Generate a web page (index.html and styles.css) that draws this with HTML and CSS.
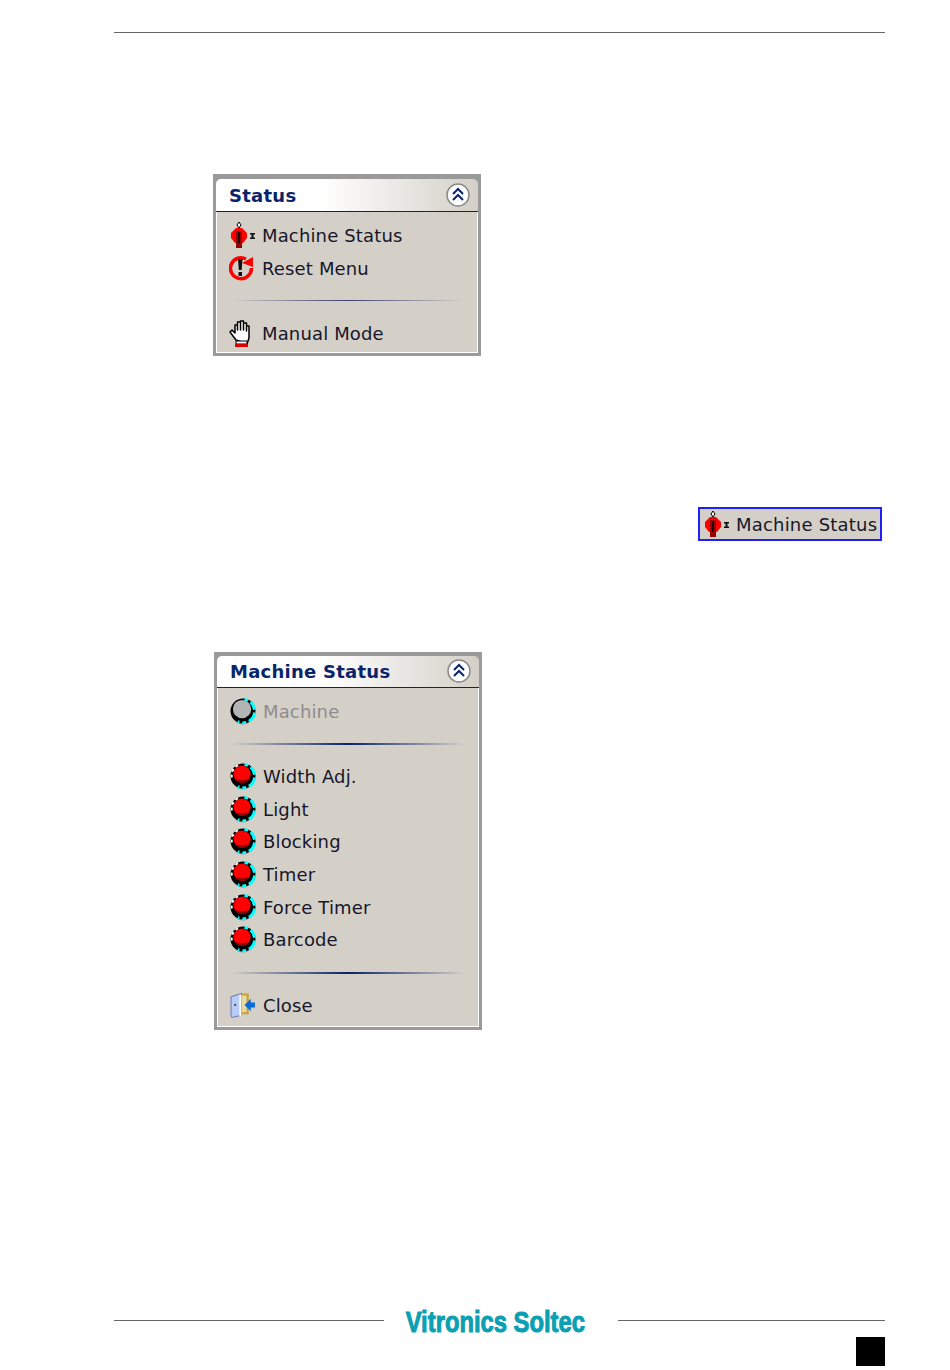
FILE: index.html
```html
<!DOCTYPE html>
<html lang="en">
<head>
    <meta charset="UTF-8">
    <meta name="viewport" content="width=device-width, initial-scale=1.0">
    <title>Machine Status</title>
    <link rel="stylesheet" href="styles.css">
</head>
<body>
    <svg class="defs" aria-hidden="true">
        <symbol id="chevrons" viewBox="0 0 24 24">
            <circle cx="12" cy="12" r="11" fill="#fff" stroke="#8a8a8a" stroke-width="1.5"/>
            <path d="M7 11l5-5 5 5M7 17l5-5 5 5" fill="none" stroke="#0a246a" stroke-width="2"/>
        </symbol>
        <symbol id="valve" viewBox="-2 0 26 27">
            <path d="M8 0l2 3-2 3-2-3z" fill="#fff" stroke="#000"/>
            <path d="M5 6h6l5 5v5l-4 5H4l-4-5v-5z" fill="#f00"/>
            <path d="M5 9h6v17H5z" fill="#900"/>
            <path d="M7 10h2v11H7z" fill="#200"/>
            <path d="M19 11h5v1.500h-1.500v3H24V17h-5v-1.500h1.500v-3H19z" fill="#111"/>
        </symbol>
        <symbol id="reset" viewBox="1 0 26 27">
            <path d="M18 4A10.500 10.500 0 1 0 23.500 13" fill="none" stroke="#f00" stroke-width="3.500"/>
            <path d="M14 8l11-6v10z" fill="#f00"/>
            <path d="M10 4h4.500l-.8 11h-2.900zM10.500 17h3.500v4h-3.500z" fill="#111"/>
        </symbol>
        <symbol id="hand" viewBox="0 0 24 27">
            <path d="M6 20L0 12l2-2 3 3V5h2.500v5-8h3v8-9h3v9-7h3v8-5H19v12l-2 6z" fill="#fff" stroke="#000" stroke-width="1.500" stroke-linejoin="round"/>
            <path d="M6 21h11v3H6z" fill="#fff" stroke="#000"/>
            <path d="M5 24h13v3H5z" fill="#d00"/>
        </symbol>
        <symbol id="led" viewBox="0 0 27 28">
            <circle cx="13.500" cy="16" r="11.500" fill="#999"/>
            <circle cx="13.500" cy="13.500" r="13" fill="#000"/>
            <path d="M15 1.500a12 12 0 0 1 10.500 12A12 12 0 0 1 8 24.500" fill="none" stroke="#0ff" stroke-width="3" stroke-dasharray="4 3 9 3 11 3"/>
            <path d="M2 15A11 11 0 0 1 10 2" fill="none" stroke="#fff" stroke-width="2" stroke-dasharray="3 3"/>
            <circle cx="12.500" cy="11.500" r="9" fill="#f00"/>
            <path d="M5 16.500a9 9 0 0 0 15 0q-8 3-15 0z" fill="#800"/>
        </symbol>
        <symbol id="led-off" viewBox="0 0 27 28">
            <circle cx="13.500" cy="16" r="11.500" fill="#999"/>
            <circle cx="13.500" cy="13.500" r="13" fill="#000"/>
            <path d="M15 1.500a12 12 0 0 1 10.500 12A12 12 0 0 1 8 24.500" fill="none" stroke="#0ff" stroke-width="3" stroke-dasharray="4 3 9 3 11 3"/>
            <circle cx="12.500" cy="11.500" r="9.500" fill="#b4b4b4"/>
        </symbol>
        <symbol id="door" viewBox="0 0 25 25">
            <path d="M10 2h7v18h-7z" fill="#e8d8a8" stroke="#c8a030" stroke-width="2"/>
            <path d="M1 4l10-3v21L2 24l-1-2z" fill="#b8ccf8" stroke="#7878b8"/>
            <path d="M9 2h2v21H9z" fill="#fff"/>
            <path d="M4 11h2v2H4z" fill="#556"/>
            <path d="M14 12l6-6v3.500h4v5h-4V18z" fill="#0a6ad8"/>
        </symbol>
    </svg>

    <div class="page">
        <div class="top-rule"></div>

        <section class="panel panel-status">
            <header class="panel-head">
                <h2>Status</h2>
                <svg class="collapse"><use href="#chevrons"/></svg>
            </header>
            <div class="panel-body">
                <div class="row"><svg class="ico"><use href="#valve"/></svg>Machine Status</div>
                <div class="row"><svg class="ico"><use href="#reset"/></svg>Reset Menu</div>
                <div class="sep sep-faint"></div>
                <div class="row"><svg class="ico"><use href="#hand"/></svg>Manual Mode</div>
            </div>
        </section>

        <div class="chip-line">
            <div class="chip"><svg class="ico"><use href="#valve"/></svg>Machine Status</div>
        </div>

        <section class="panel panel-machine">
            <header class="panel-head">
                <h2>Machine Status</h2>
                <svg class="collapse"><use href="#chevrons"/></svg>
            </header>
            <div class="panel-body">
                <div class="row off"><svg class="ico"><use href="#led-off"/></svg>Machine</div>
                <div class="sep"></div>
                <div class="row"><svg class="ico"><use href="#led"/></svg>Width Adj.</div>
                <div class="row"><svg class="ico"><use href="#led"/></svg>Light</div>
                <div class="row"><svg class="ico"><use href="#led"/></svg>Blocking</div>
                <div class="row"><svg class="ico"><use href="#led"/></svg>Timer</div>
                <div class="row"><svg class="ico"><use href="#led"/></svg>Force Timer</div>
                <div class="row"><svg class="ico"><use href="#led"/></svg>Barcode</div>
                <div class="sep"></div>
                <div class="row"><svg class="ico"><use href="#door"/></svg>Close</div>
            </div>
        </section>

        <footer class="foot">
            <div class="foot-line">
                <div class="rule rule-left"></div>
                <div class="logo"><span>Vitronics Soltec</span></div>
                <div class="rule"></div>
            </div>
            <div class="page-mark"></div>
        </footer>
    </div>
</body>
</html>
```

FILE: styles.css
```css
html, body {
    margin: 0;
    background: #fff;
}
.defs {
    display: none;
}
.page {
    width: 771px;
    height: 1370px;
    margin-left: 114px;
    padding-top: 32px;
    box-sizing: border-box;
    display: flex;
    flex-direction: column;
    font-family: "DejaVu Sans", Verdana, sans-serif;
    overflow: hidden;
}
.top-rule {
    height: 1px;
    background: #666;
}
.panel {
    width: 268px;
    box-sizing: border-box;
    border: 3px solid #9a9a9a;
    border-top-width: 4px;
    background: #9a9a9a;
}
.panel-status {
    margin: 141px 0 0 99px;
    border-top-width: 5px;
}
.panel-machine {
    margin: 111px 0 0 100px;
}
.panel-head {
    height: 33px;
    box-sizing: border-box;
    padding: 0 8px 0 13px;
    display: flex;
    align-items: center;
    justify-content: space-between;
    background: linear-gradient(to right, #fff 40%, #d4d0c8);
    border-bottom: 1px solid #0a246a;
    border-radius: 5px 5px 0 0;
}
.panel-machine .panel-head {
    height: 32px;
}
.panel-head h2 {
    margin: 0;
    font-size: 18px;
    font-weight: bold;
    letter-spacing: 0.25px;
    color: #0a246a;
}
.collapse {
    width: 24px;
    height: 24px;
}
.panel-body {
    padding: 7px 0 4px;
    background: #d4d0c8;
    border: 1px solid #fff;
    border-top: 0;
}
.panel-status .panel-body {
    padding-bottom: 2px;
}
.row {
    height: 32.7px;
    padding-left: 12px;
    display: flex;
    align-items: center;
    gap: 7px;
    font-size: 18px;
    letter-spacing: 0.15px;
    color: #16162a;
}
.row.off {
    color: #8f8c90;
}
.ico {
    width: 26px;
    height: 27px;
    flex: none;
}
.sep {
    height: 2px;
    margin: 15.5px 13px 15.2px;
    background: linear-gradient(to right, #d4d0c8, #0a246a 50%, #d4d0c8);
}
.sep-faint {
    height: 1px;
    margin: 16px 13px 15.7px;
    background: linear-gradient(to right, #d4d0c8, #3a4070 50%, #d4d0c8);
}
.chip-line {
    display: flex;
    justify-content: flex-end;
    margin: 151px 3px 0 0;
}
.chip {
    width: 184px;
    height: 34px;
    box-sizing: border-box;
    border: 2px solid #2020f0;
    background: #d4d0c8;
    padding: 1px 0 0 3px;
    display: flex;
    align-items: center;
    gap: 7px;
    font-size: 18px;
    letter-spacing: 0.2px;
    color: #16162a;
}
.foot {
    margin-top: auto;
    padding-bottom: 4px;
}
.foot-line {
    display: flex;
    align-items: center;
}
.rule {
    flex: 1;
    height: 1px;
    background: #666;
}
.rule-left {
    flex: none;
    width: 270px;
}
.logo {
    width: 234px;
    height: 30px;
    box-sizing: border-box;
    padding-top: 4px;
    display: flex;
    align-items: center;
    justify-content: center;
    font-family: "Liberation Sans", Arial, sans-serif;
    font-size: 29px;
    font-weight: bold;
    color: #0a9fb2;
    white-space: nowrap;
}
.logo span {
    display: inline-block;
    margin-right: 11px;
    transform: scaleX(0.82);
    -webkit-text-stroke: 1px #0a9fb2;
}
.page-mark {
    width: 29px;
    height: 29px;
    margin: 2px 0 0 auto;
    background: #000;
}
```
